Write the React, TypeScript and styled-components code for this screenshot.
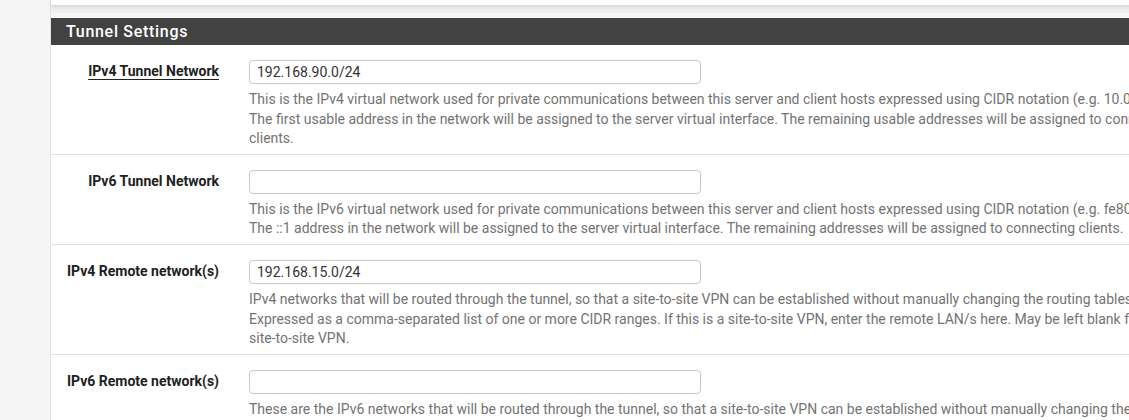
import React from "react";
import styled, { createGlobalStyle } from "styled-components";

const GlobalStyle = createGlobalStyle`
  html, body {
    margin: 0;
    padding: 0;
    overflow: hidden;
    background: #f5f5f5;
    font-family: Roboto, "Liberation Sans", Arial, sans-serif;
  }
`;

const Page = styled.div`
  display: flex;
  padding-left: 50px;
  min-height: 420px;
`;

const Main = styled.div`
  display: flex;
  flex-direction: column;
  width: 1100px;
  flex-shrink: 0;
  border-left: 1px solid #e2e2e2;
  background: linear-gradient(#e6e6e6, #f0f0f0 13px, #f5f5f5 13px);
`;

const PrevPanel = styled.div`
  height: 5px;
  background: #fff;
  box-shadow: 0 1px 4px rgba(0, 0, 0, 0.12);
  margin-bottom: 13px;
`;

const Panel = styled.section`
  background: #fff;
  display: flex;
  flex-direction: column;
`;

const PanelHeading = styled.h2`
  margin: 0;
  height: 27px;
  line-height: 27px;
  background: #424242;
  color: #fff;
  font-size: 16px;
  font-weight: 500;
  letter-spacing: 0.7px;
  padding-left: 15px;
`;

const Row = styled.div`
  display: grid;
  grid-template-columns: 183px 1fr;
  padding: 15px 0 5px;
  border-bottom: 1px solid #e0e0e0;
`;

const Label = styled.div<{ $link?: boolean }>`
  padding: 0 15px;
  text-align: right;
  font-size: 14px;
  font-weight: 700;
  line-height: 22px;
  color: #212121;
  white-space: nowrap;
  span {
    text-decoration: ${(p) => (p.$link ? "underline" : "none")};
    text-underline-offset: 3px;
  }
`;

const Field = styled.div`
  padding: 0 15px;
  display: flex;
  flex-direction: column;
  min-width: 0;
`;

const Input = styled.input`
  box-sizing: border-box;
  width: 452px;
  height: 24px;
  border: 1px solid #c8c8c8;
  border-radius: 4px;
  padding: 0 7px;
  font-family: inherit;
  font-size: 14px;
  color: #333;
  background: #fff;
  outline: none;
`;

const Help = styled.div`
  margin-top: 6px;
  font-size: 14px;
  line-height: 19.6px;
  color: #737373;
  white-space: nowrap;
`;

type RowData = {
  label: string;
  link?: boolean;
  value: string;
  help: string[];
};

const rows: RowData[] = [
  {
    label: "IPv4 Tunnel Network",
    link: true,
    value: "192.168.90.0/24",
    help: [
      "This is the IPv4 virtual network used for private communications between this server and client hosts expressed using CIDR notation (e.g. 10.0.8.0/24).",
      "The first usable address in the network will be assigned to the server virtual interface. The remaining usable addresses will be assigned to connecting",
      "clients.",
    ],
  },
  {
    label: "IPv6 Tunnel Network",
    value: "",
    help: [
      "This is the IPv6 virtual network used for private communications between this server and client hosts expressed using CIDR notation (e.g. fe80::/64).",
      "The ::1 address in the network will be assigned to the server virtual interface. The remaining addresses will be assigned to connecting clients.",
    ],
  },
  {
    label: "IPv4 Remote network(s)",
    value: "192.168.15.0/24",
    help: [
      "IPv4 networks that will be routed through the tunnel, so that a site-to-site VPN can be established without manually changing the routing tables.",
      "Expressed as a comma-separated list of one or more CIDR ranges. If this is a site-to-site VPN, enter the remote LAN/s here. May be left blank for non",
      "site-to-site VPN.",
    ],
  },
  {
    label: "IPv6 Remote network(s)",
    value: "",
    help: [
      "These are the IPv6 networks that will be routed through the tunnel, so that a site-to-site VPN can be established without manually changing the routing tables.",
    ],
  },
];

export default function App() {
  return (
    <>
      <GlobalStyle />
      <Page>
        <Main>
          <PrevPanel />
          <Panel>
            <PanelHeading>Tunnel Settings</PanelHeading>
            {rows.map((r) => (
              <Row key={r.label}>
                <Label $link={r.link}>
                  <span>{r.label}</span>
                </Label>
                <Field>
                  <Input defaultValue={r.value} />
                  <Help>
                    {r.help.map((h, i) => (
                      <div key={i}>{h}</div>
                    ))}
                  </Help>
                </Field>
              </Row>
            ))}
          </Panel>
        </Main>
      </Page>
    </>
  );
}
